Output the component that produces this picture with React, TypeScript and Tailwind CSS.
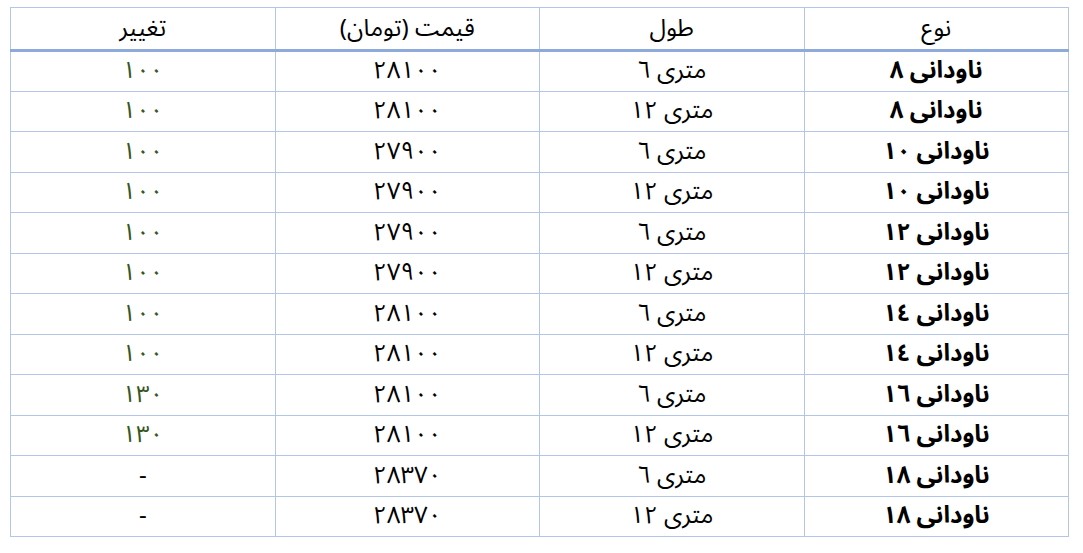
const rows = [
  ["ناودانی ٨", "متری ٦", "٢٨١٠٠", "١٠٠"],
  ["ناودانی ٨", "متری ١٢", "٢٨١٠٠", "١٠٠"],
  ["ناودانی ١٠", "متری ٦", "٢٧٩٠٠", "١٠٠"],
  ["ناودانی ١٠", "متری ١٢", "٢٧٩٠٠", "١٠٠"],
  ["ناودانی ١٢", "متری ٦", "٢٧٩٠٠", "١٠٠"],
  ["ناودانی ١٢", "متری ١٢", "٢٧٩٠٠", "١٠٠"],
  ["ناودانی ١٤", "متری ٦", "٢٨١٠٠", "١٠٠"],
  ["ناودانی ١٤", "متری ١٢", "٢٨١٠٠", "١٠٠"],
  ["ناودانی ١٦", "متری ٦", "٢٨١٠٠", "١٣٠"],
  ["ناودانی ١٦", "متری ١٢", "٢٨١٠٠", "١٣٠"],
  ["ناودانی ١٨", "متری ٦", "٢٨٣٧٠", "-"],
  ["ناودانی ١٨", "متری ١٢", "٢٨٣٧٠", "-"],
];

const headers = ["نوع", "طول", "قیمت (تومان)", "تغییر"];

export default function App() {
  return (
    <div className="min-h-screen bg-white pt-[7px] pl-[10px] pr-[14px]">
      <table
        dir="rtl"
        className="w-[1059px] table-fixed border-collapse text-black leading-[28px]"
        style={{ fontFamily: '"Noto Sans Arabic", "DejaVu Sans", sans-serif' }}
      >
        <thead>
          <tr className="h-[43px]">
            {headers.map((h) => (
              <th
                key={h}
                className="border border-[#b4c6e7] border-b-[3px] border-b-[#8eaadb] p-0 text-center text-[24px] font-normal"
              >
                {h}
              </th>
            ))}
          </tr>
        </thead>
        <tbody>
          {rows.map((r, i) => (
            <tr key={i} className="h-[40.5px]">
              <td className="border border-[#b4c6e7] p-0 text-center text-[24px] font-bold">
                {r[0]}
              </td>
              <td className="border border-[#b4c6e7] p-0 text-center text-[24px]">
                {r[1]}
              </td>
              <td className="border border-[#b4c6e7] p-0 text-center text-[24px]">
                {r[2]}
              </td>
              <td
                className={`border border-[#b4c6e7] p-0 text-center text-[24px] ${
                  r[3] === "-" ? "text-black" : "text-[#375623]"
                }`}
              >
                {r[3]}
              </td>
            </tr>
          ))}
        </tbody>
      </table>
    </div>
  );
}
